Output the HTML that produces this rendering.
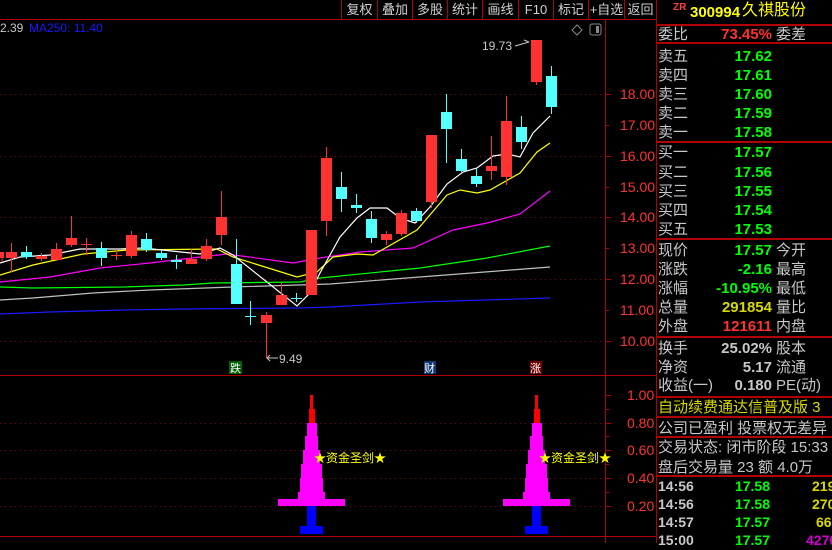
<!DOCTYPE html>
<html><head><meta charset="utf-8"><style>
*{margin:0;padding:0;box-sizing:border-box}
body{width:832px;height:543px;background:#000;overflow:hidden;position:relative;font-family:"Liberation Sans","Noto Sans CJK SC",sans-serif}
.t{position:absolute;white-space:nowrap;line-height:1}
.g{color:#c8c8c8}
.btn{position:absolute;top:0;height:19px;color:#d0d0d0;font-size:13px;line-height:19px;text-align:center;border-left:1px solid #b00000}
.r{position:absolute;left:658px;width:174px;font-size:15px;line-height:19px;height:19px;color:#c8c8c8;white-space:nowrap}
.r .v{position:absolute;right:60px;font-weight:bold}
.r .l2{position:absolute;left:118px}
.hl{position:absolute;left:656px;width:176px;height:2px;background:#b00000}
</style></head><body>
<div class="btn" style="left:341px;width:36px">复权</div>
<div class="btn" style="left:377px;width:35px">叠加</div>
<div class="btn" style="left:412px;width:35px">多股</div>
<div class="btn" style="left:447px;width:35px">统计</div>
<div class="btn" style="left:482px;width:36px">画线</div>
<div class="btn" style="left:518px;width:35px">F10</div>
<div class="btn" style="left:553px;width:35px">标记</div>
<div class="btn" style="left:588px;width:36px">+自选</div>
<div class="btn" style="left:624px;width:32px">返回</div>
<div style="position:absolute;left:0;top:19px;width:656px;height:1px;background:#b00000"></div>
<div class="t g" style="left:0;top:22px;font-size:12px">2.39</div>
<div class="t" style="left:29px;top:22px;font-size:12px;color:#1818ff">MA250: 11.40</div>

<svg width="832" height="543" style="position:absolute;left:0;top:0">
<g stroke="#8a0000" stroke-dasharray="1,4">
<line x1="0" y1="94.5" x2="605" y2="94.5"/><line x1="0" y1="156.5" x2="605" y2="156.5"/><line x1="0" y1="217.5" x2="605" y2="217.5"/><line x1="0" y1="279.5" x2="605" y2="279.5"/><line x1="0" y1="341.5" x2="605" y2="341.5"/>
<line x1="0" y1="423.5" x2="605" y2="423.5"/><line x1="0" y1="450.5" x2="605" y2="450.5"/><line x1="0" y1="478.5" x2="605" y2="478.5"/><line x1="0" y1="506.5" x2="605" y2="506.5"/>
</g>
<g stroke="#b00000" fill="none">
<line x1="605.5" y1="19" x2="605.5" y2="543"/>
<line x1="656.5" y1="0" x2="656.5" y2="543"/>
<line x1="0" y1="375.5" x2="656" y2="375.5"/>
<line x1="0" y1="536.5" x2="656" y2="536.5"/>
<path d="M605 94.5h6M605 125.5h4M605 156.5h6M605 187.5h4M605 217.5h6M605 248.5h4M605 279.5h6M605 310.5h4M605 341.5h6M605 395.5h6M605 409.5h4M605 423.5h6M605 436.5h4M605 450.5h6M605 464.5h4M605 478.5h6M605 492.5h4M605 506.5h6"/>
</g>
<g fill="#ff3232" font-size="14" font-family="Liberation Sans">
<text x="620" y="99">18.00</text><text x="620" y="130">17.00</text><text x="620" y="161">16.00</text><text x="620" y="192">15.00</text><text x="620" y="222">14.00</text><text x="620" y="253">13.00</text><text x="620" y="284">12.00</text><text x="620" y="315">11.00</text><text x="620" y="346">10.00</text>
<text x="627" y="400">1.00</text><text x="627" y="428">0.80</text><text x="627" y="455">0.60</text><text x="627" y="483">0.40</text><text x="627" y="511">0.20</text>
</g>
<path d="M577 25l5 5-5 5-5-5z" fill="none" stroke="#888"/>
<rect x="590" y="24" width="11" height="11" rx="2" fill="none" stroke="#888"/><rect x="596" y="26" width="3" height="7" fill="#888"/>
<g fill="none" stroke-width="1.2">
<polyline stroke="#1a1aff" points="0,314 50,312 123,310 183,309 300,308 330,307 420,302 550,298"/>
<polyline stroke="#c0c0c0" points="0,300 33,298 93,293 150,290 233,287 330,284 420,277 550,267"/>
<polyline stroke="#00ff00" points="0,287 33,288 123,287 183,285 213,283 300,282 320,278 420,268 487,258 550,246"/>
<polyline stroke="#ff00ff" points="0,282 50,277 100,268 150,263 200,257 227,254 293,263 320,258 360,252 413,248 453,230 487,223 520,214 550,191"/>
<polyline stroke="#ffff00" points="0,275 33,265 83,254 127,250 217,249 233,257 297,277 317,272 333,257 357,254 373,255 417,230 447,195 460,190 477,193 490,190 520,173 537,152 550,143"/>
<polyline stroke="#ffffff" points="0,263 20,257 50,255 80,249 120,249 143,248 200,254 220,248 233,255 297,306 310,293 320,273 340,237 357,218 370,208 387,208 400,218 415,223 430,207 447,184 463,172 477,168 493,156 507,154 520,157 533,133 550,116"/>
</g>
<g id="cd"></g>
<g id="sw1">
<rect x="310" y="395" width="3" height="14" fill="#ff0000"/>
<rect x="309" y="409" width="6" height="14" fill="#ff0000"/>
<rect x="307" y="423" width="10" height="13" fill="#ff00ff"/>
<rect x="305" y="436" width="13" height="14" fill="#ff00ff"/>
<rect x="303" y="450" width="17" height="14" fill="#ff00ff"/>
<rect x="301" y="464" width="21" height="14" fill="#ff00ff"/>
<rect x="300" y="478" width="23" height="14" fill="#ff00ff"/>
<rect x="298" y="492" width="27" height="7" fill="#ff00ff"/>
<rect x="278" y="499" width="67" height="7" fill="#ff00ff"/>
<rect x="307" y="506" width="9" height="20" fill="#0000ff"/>
<rect x="300" y="526" width="23" height="8" fill="#0000ff"/>
</g>
<use href="#sw1" x="225"/>
<g fill="#ffff00" font-size="12" font-family="Liberation Sans,Noto Sans CJK SC,sans-serif">
<text x="314" y="462">★资金圣剑★</text>
<text x="539" y="462">★资金圣剑★</text>
</g>
<g fill="#c8c8c8" font-size="12" font-family="Liberation Sans">
<text x="482" y="50">19.73</text>
<text x="279" y="363">9.49</text>
</g>
<path d="M515 46l14-4M524 40l5 2" stroke="#c8c8c8" fill="none"/>
<path d="M267 358h11M270 355l-3 3 3 3" stroke="#c8c8c8" fill="none"/>
<rect x="229" y="361" width="13" height="13" fill="#006000"/>
<rect x="424" y="361" width="12" height="13" fill="#103870"/>
<rect x="530" y="361" width="12" height="13" fill="#700000"/>
<g fill="#fff" font-size="11" font-family="Noto Sans CJK SC,sans-serif"><text x="230" y="372">跌</text><text x="424" y="372">财</text><text x="530" y="372">涨</text></g>
</svg>
<script>
var R='#ff3232',C='#54ffff';
var d=[[0,252,258,252,262,R],[6,252,258,243,272,R],[21,252,257,246,259,C],[36,256,259,253,261,R],[51,249,260,243,260,R],[66,238,245,216,247,R],[81,244,245,238,255,R],[96,248,258,242,266,C],[111,255,256,250,260,R],[126,235,256,231,258,R],[141,239,250,233,252,C],[156,253,258,250,260,C],[171,260,262,255,269,C],[186,259,264,249,264,R],[201,246,259,239,261,R],[216,217,235,191,245,R],[231,264,304,239,304,C],[245,316,317,301,325,C],[261,315,323,312,358,R],[276,295,305,283,305,R],[291,298,299,293,302,C],[306,230,295,230,295,R],[321,158,221,147,236,R],[336,187,199,172,212,C],[351,205,208,194,213,C],[366,219,238,211,243,C],[381,234,240,231,245,R],[396,213,234,210,236,R],[411,211,221,208,223,C],[426,135,202,135,208,R],[441,112,129,94,163,C],[456,159,171,149,172,C],[471,176,184,168,187,C],[486,166,171,136,180,R],[501,121,177,96,185,R],[516,127,142,116,149,C],[531,40,82,40,85,R],[546,76,107,66,114,C]];
var s='';d.forEach(function(c){var x=c[0],w=c[0]==0?4:11,h=Math.max(1,c[2]-c[1]);var cx=x+(c[0]==0?2:5.5);
s+='<line x1="'+cx+'" y1="'+c[3]+'" x2="'+cx+'" y2="'+c[4]+'" stroke="'+c[5]+'"/><rect x="'+x+'" y="'+c[1]+'" width="'+w+'" height="'+h+'" fill="'+c[5]+'"/>';});
document.getElementById('cd').innerHTML=s;
</script>

<div class="t" style="left:673px;top:3px;font-size:10px;color:#ff4040;font-weight:bold">ZR</div>
<div class="t" style="left:690px;top:5px;font-size:15px;color:#ffff00;font-weight:bold">300994</div>
<div class="t" style="left:742px;top:3px;font-size:16px;color:#ffff00">久祺股份</div>
<div class="hl" style="top:24px"></div>
<div class="r" style="top:25px">委比<span class="v" style="color:#ff3232">73.45%</span><span class="l2">委差</span></div>
<div class="hl" style="top:42px"></div>
<div class="r" style="top:47px">卖五<span class="v" style="color:#00ff00">17.62</span></div>
<div class="r" style="top:66px">卖四<span class="v" style="color:#00ff00">17.61</span></div>
<div class="r" style="top:85px">卖三<span class="v" style="color:#00ff00">17.60</span></div>
<div class="r" style="top:104px">卖二<span class="v" style="color:#00ff00">17.59</span></div>
<div class="r" style="top:123px">卖一<span class="v" style="color:#00ff00">17.58</span></div>
<div class="hl" style="top:141px"></div>
<div class="r" style="top:143px">买一<span class="v" style="color:#00ff00">17.57</span></div>
<div class="r" style="top:163px">买二<span class="v" style="color:#00ff00">17.56</span></div>
<div class="r" style="top:182px">买三<span class="v" style="color:#00ff00">17.55</span></div>
<div class="r" style="top:201px">买四<span class="v" style="color:#00ff00">17.54</span></div>
<div class="r" style="top:220px">买五<span class="v" style="color:#00ff00">17.53</span></div>
<div class="hl" style="top:238px"></div>
<div class="r" style="top:241px">现价<span class="v" style="color:#00ff00">17.57</span><span class="l2">今开</span></div>
<div class="r" style="top:260px">涨跌<span class="v" style="color:#00ff00">-2.16</span><span class="l2">最高</span></div>
<div class="r" style="top:279px">涨幅<span class="v" style="color:#00ff00">-10.95%</span><span class="l2">最低</span></div>
<div class="r" style="top:298px">总量<span class="v" style="color:#d8d800">291854</span><span class="l2">量比</span></div>
<div class="r" style="top:317px">外盘<span class="v" style="color:#ff3232">121611</span><span class="l2">内盘</span></div>
<div class="hl" style="top:336px"></div>
<div class="r" style="top:339px">换手<span class="v">25.02%</span><span class="l2">股本</span></div>
<div class="r" style="top:358px">净资<span class="v">5.17</span><span class="l2">流通</span></div>
<div class="r" style="top:376px">收益(一)<span class="v">0.180</span><span class="l2">PE(动)</span></div>
<div class="hl" style="top:396px"></div>
<div class="r" style="top:398px;color:#d8d800">自动续费通达信普及版 3</div>
<div class="hl" style="top:416px"></div>
<div class="r" style="top:419px">公司已盈利 投票权无差异</div>
<div class="hl" style="top:436px"></div>
<div class="r" style="top:438px">交易状态: 闭市阶段 15:33</div>
<div class="r" style="top:458px">盘后交易量 23 额 4.0万</div>
<div class="hl" style="top:475px"></div>
<div class="r" style="top:477px;font-weight:bold;font-size:14px">14:56<span class="v" style="color:#00ff00;right:62px">17.58</span><span style="position:absolute;left:154px;color:#d8d800">219</span></div>
<div class="r" style="top:495px;font-weight:bold;font-size:14px">14:56<span class="v" style="color:#00ff00;right:62px">17.58</span><span style="position:absolute;left:154px;color:#d8d800">270</span></div>
<div class="r" style="top:513px;font-weight:bold;font-size:14px">14:57<span class="v" style="color:#00ff00;right:62px">17.57</span><span style="position:absolute;left:158px;color:#d8d800">66</span></div>
<div class="r" style="top:531px;font-weight:bold;font-size:14px">15:00<span class="v" style="color:#00ff00;right:62px">17.57</span><span style="position:absolute;left:148px;color:#d000d0">4270</span></div>
</body></html>
